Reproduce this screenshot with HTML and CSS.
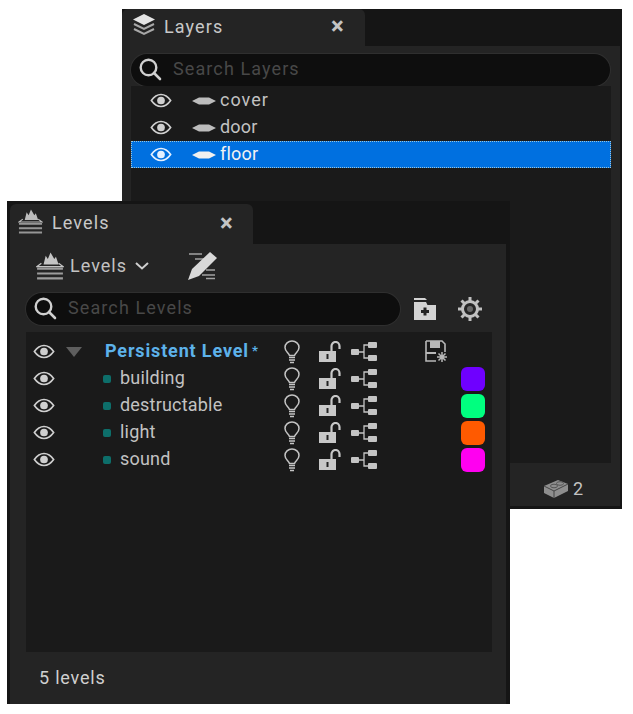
FILE: index.html
```html
<!DOCTYPE html>
<html lang="en">
<head>
<meta charset="UTF-8" />
<title>Layers and Levels</title>
<link rel="stylesheet" href="styles.css">
</head>
<body>

<svg class="defs" width="0" height="0">
  <symbol id="i-eye" viewBox="0 0 24 16">
    <path d="M1.500 8C5 3 8.500 1.500 12 1.500S19 3 22.500 8C19 13 15.500 14.500 12 14.500S5 13 1.500 8Z" fill="none" stroke="currentColor" stroke-width="1.800"/>
    <circle cx="12" cy="8" r="4.200" fill="currentColor"/>
  </symbol>
  <symbol id="i-plane" viewBox="0 0 24 8">
    <path d="M0 4 7 .5h10L24 4l-7 3.500H7Z" fill="currentColor"/>
  </symbol>
  <symbol id="i-search" viewBox="0 0 24 24">
    <circle cx="10.500" cy="10.500" r="7.800" fill="none" stroke="currentColor" stroke-width="2.400"/>
    <path d="M16 16l6 6" stroke="currentColor" stroke-width="2.600" stroke-linecap="round"/>
  </symbol>
  <symbol id="i-stack" viewBox="0 0 24 24">
    <path d="M12 1 23 6.500 12 12 1 6.500Z" fill="#e4e4e4"/>
    <path d="M2 11l10 5 10-5M2 16l10 5 10-5" fill="none" stroke="#a8a8a8" stroke-width="2"/>
  </symbol>
  <symbol id="i-levels" viewBox="0 0 26 25">
    <path d="M7 11 9 3l2 3 2.500-6L17 6l1.500-2L21 11Z" fill="currentColor"/>
    <path d="M5 10 1 13h24l-4-3" fill="none" stroke="currentColor" stroke-width="1.200"/>
    <path d="M1 15h24M1 19.500h24M1 24h24" stroke="currentColor" stroke-width="2" opacity=".75"/>
  </symbol>
  <symbol id="i-pencil" viewBox="0 0 30 28">
    <path d="M2 2h13M8 7h11M19 18h9M15 23h13M19 26.500h9" stroke="currentColor" stroke-width="1.300" opacity=".7"/>
    <path d="M23 0 30 6 12 24l-11 4 4-11Z" fill="currentColor"/>
  </symbol>
  <symbol id="i-folder" viewBox="0 0 22 22">
    <path d="M0 0h11l2 2H0Z" fill="currentColor"/>
    <path d="M0 4h12l1.500 3H22v15H0Z" fill="currentColor"/>
    <path d="M11 9.500v8M7 13.500h8" stroke="#242424" stroke-width="3"/>
  </symbol>
  <symbol id="i-gear" viewBox="0 0 24 24">
    <circle cx="12" cy="12" r="7.500" fill="none" stroke="currentColor" stroke-width="3"/>
    <path d="M12 0v5M12 19v5M0 12h5M19 12h5M3.500 3.500l3.500 3.500M17 17l3.500 3.500M20.500 3.500 17 7M7 17l-3.500 3.500" stroke="currentColor" stroke-width="3"/>
    <circle cx="12" cy="12" r="3" fill="#666"/>
  </symbol>
  <symbol id="i-bulb" viewBox="0 0 16 24">
    <path d="M5.500 15.500C4.500 12.500 1 11.500 1 7.500a7 6.500 0 0 1 14 0c0 4-3.500 5-4.500 8Z" fill="none" stroke="currentColor" stroke-width="1.500"/>
    <path d="M5 17.500h6M5 20h6M6 22.500h4" stroke="currentColor" stroke-width="1.600"/>
  </symbol>
  <symbol id="i-lock" viewBox="0 0 22 21">
    <path d="M0 10h17v11H0Z" fill="currentColor"/>
    <path d="M12.500 10V5a4 4 0 0 1 8 0v3" fill="none" stroke="currentColor" stroke-width="2.200"/>
    <path d="M8.500 13v5" stroke="#222" stroke-width="2"/>
  </symbol>
  <symbol id="i-tree" viewBox="0 0 26 20">
    <rect x="0" y="7" width="8" height="6" rx="1" fill="currentColor"/>
    <rect x="17" y="0" width="9" height="6" rx="1" fill="currentColor"/>
    <rect x="17" y="13" width="9" height="6" rx="1" fill="currentColor"/>
    <path d="M8 10h5M17 3h-4v13h4" fill="none" stroke="currentColor" stroke-width="1.300"/>
  </symbol>
  <symbol id="i-save" viewBox="0 0 24 24">
    <path d="M1 1h16l3 3v8M11 21H1V1" fill="none" stroke="currentColor" stroke-width="1.600"/>
    <path d="M5 1h10v7H5ZM1 12h10v2H1Z" fill="currentColor"/>
    <path d="M17 12v10M12 17h10M13.500 13.500l7 7M20.500 13.500l-7 7" stroke="currentColor" stroke-width="1.500"/>
  </symbol>
  <symbol id="i-brick" viewBox="0 0 26 20">
    <path d="M1 7 15 1l10 4v7L11 19 1 14Z" fill="#8e8e8e"/>
    <path d="M1 7l10 5 14-7M11 12v7" fill="none" stroke="#444" stroke-width="1"/>
    <ellipse cx="11" cy="7" rx="3.500" ry="1.800" fill="none" stroke="#555"/>
    <ellipse cx="17" cy="4.500" rx="3.500" ry="1.800" fill="none" stroke="#555"/>
  </symbol>
</svg>

<section class="window layers-window">
  <div class="tabstrip">
    <div class="tab">
      <svg class="tab-icon"><use href="#i-stack"/></svg>
      <span class="tab-title">Layers</span>
      <span class="tab-close">×</span>
    </div>
  </div>
  <div class="panel">
    <div class="search">
      <svg class="search-icon"><use href="#i-search"/></svg>
      <span class="search-hint">Search Layers</span>
    </div>
    <div class="list layers-list">
      <div class="layer-row">
        <svg class="eye"><use href="#i-eye"/></svg>
        <svg class="plane"><use href="#i-plane"/></svg>
        <span class="wide">cover</span>
      </div>
      <div class="layer-row">
        <svg class="eye"><use href="#i-eye"/></svg>
        <svg class="plane"><use href="#i-plane"/></svg>
        <span>door</span>
      </div>
      <div class="layer-row selected">
        <svg class="eye"><use href="#i-eye"/></svg>
        <svg class="plane"><use href="#i-plane"/></svg>
        <span>floor</span>
      </div>
    </div>
    <div class="status layers-status">
      <svg class="brick"><use href="#i-brick"/></svg>
      <span>2</span>
    </div>
  </div>
</section>

<section class="window levels-window">
  <div class="tabstrip">
    <div class="tab">
      <svg class="tab-icon levels-icon"><use href="#i-levels"/></svg>
      <span class="tab-title">Levels</span>
      <span class="tab-close">×</span>
    </div>
  </div>
  <div class="panel">
    <div class="toolbar">
      <svg class="toolbar-levels"><use href="#i-levels"/></svg>
      <span class="toolbar-label">Levels</span>
      <svg class="chevron" viewBox="0 0 14 8"><path d="M1 1l6 5.500L13 1" fill="none" stroke="currentColor" stroke-width="2"/></svg>
      <svg class="pencil"><use href="#i-pencil"/></svg>
    </div>
    <div class="search-row">
      <div class="search">
        <svg class="search-icon"><use href="#i-search"/></svg>
        <span class="search-hint">Search Levels</span>
      </div>
      <svg class="folder"><use href="#i-folder"/></svg>
      <svg class="gear"><use href="#i-gear"/></svg>
    </div>
    <div class="list levels-list">
      <div class="level-row">
        <svg class="eye"><use href="#i-eye"/></svg>
        <div class="level-name persistent">
          <svg class="arrow" viewBox="0 0 16 10"><path d="M0 0h16L8 10Z" fill="currentColor"/></svg>
          <span>Persistent Level</span><span class="dirty">*</span>
        </div>
        <svg class="bulb"><use href="#i-bulb"/></svg>
        <svg class="lock"><use href="#i-lock"/></svg>
        <svg class="tree"><use href="#i-tree"/></svg>
        <svg class="save"><use href="#i-save"/></svg>
        <span></span>
      </div>
      <div class="level-row">
        <svg class="eye"><use href="#i-eye"/></svg>
        <div class="level-name"><i class="dot"></i><span>building</span></div>
        <svg class="bulb"><use href="#i-bulb"/></svg>
        <svg class="lock"><use href="#i-lock"/></svg>
        <svg class="tree"><use href="#i-tree"/></svg>
        <span></span>
        <i class="swatch violet"></i>
      </div>
      <div class="level-row">
        <svg class="eye"><use href="#i-eye"/></svg>
        <div class="level-name"><i class="dot"></i><span>destructable</span></div>
        <svg class="bulb"><use href="#i-bulb"/></svg>
        <svg class="lock"><use href="#i-lock"/></svg>
        <svg class="tree"><use href="#i-tree"/></svg>
        <span></span>
        <i class="swatch green"></i>
      </div>
      <div class="level-row">
        <svg class="eye"><use href="#i-eye"/></svg>
        <div class="level-name"><i class="dot"></i><span>light</span></div>
        <svg class="bulb"><use href="#i-bulb"/></svg>
        <svg class="lock"><use href="#i-lock"/></svg>
        <svg class="tree"><use href="#i-tree"/></svg>
        <span></span>
        <i class="swatch orange"></i>
      </div>
      <div class="level-row">
        <svg class="eye"><use href="#i-eye"/></svg>
        <div class="level-name"><i class="dot"></i><span>sound</span></div>
        <svg class="bulb"><use href="#i-bulb"/></svg>
        <svg class="lock"><use href="#i-lock"/></svg>
        <svg class="tree"><use href="#i-tree"/></svg>
        <span></span>
        <i class="swatch magenta"></i>
      </div>
    </div>
    <div class="status levels-status">5 levels</div>
  </div>
</section>

</body>
</html>
```

FILE: styles.css
```css
body {
  margin: 0;
  background: #fff;
  color: #c2c2c2;
  font-family: Roboto, "Liberation Sans", sans-serif;
  font-size: 18px;
}
svg {
  display: block;
  flex: none;
}
.defs {
  position: absolute;
}

/* windows sit on a free canvas */
.window {
  position: absolute;
  display: flex;
  flex-direction: column;
  box-sizing: border-box;
  background: #151515;
}
.layers-window {
  left: 122px;
  top: 9px;
  width: 500px;
  height: 500px;
  padding: 0 2px 3px 0;
}
.levels-window {
  left: 7px;
  top: 201px;
  width: 503px;
  height: 503px;
  padding: 0 4px 0 3px;
}

.tabstrip {
  display: flex;
  height: 37px;
  flex: none;
}
.levels-window .tabstrip {
  height: 43px;
  padding-top: 3px;
  box-sizing: border-box;
}
.tab {
  display: flex;
  align-items: center;
  width: 243px;
  box-sizing: border-box;
  background: #242424;
  border-radius: 6px 6px 0 0;
  padding: 0 0 3px 10px;
}
.tab-icon {
  width: 24px;
  height: 24px;
  margin: -3px 8px 0 0;
}
.levels-window .tab {
  padding-left: 8px;
}
.levels-icon {
  width: 25px;
  height: 25px;
  color: #bdbdbd;
  margin-right: 9px;
}
.tab-title {
  color: #c8c8c8;
  width: 167px;
  letter-spacing: 1.1px;
}
.levels-window .tab-title {
  width: 168px;
}
.tab-close {
  color: #c4c4c4;
  font-size: 24px;
  font-weight: 700;
  line-height: 1;
}

.panel {
  flex: 1;
  display: flex;
  flex-direction: column;
  min-height: 0;
  background: #242424;
}

.search {
  flex: none;
  display: flex;
  align-items: center;
  height: 32px;
  box-sizing: border-box;
  background: #0e0e0e;
  border-radius: 16px;
  box-shadow: 0 0 0 1px #2f2f2f;
  color: #d0d0d0;
  padding-left: 7px;
}
.search-icon {
  width: 24px;
  height: 24px;
  margin: 0 11px 2px 0;
}
.search-hint {
  color: #484848;
  letter-spacing: 1.1px;
  padding-bottom: 3px;
}

.layers-window .search {
  margin: 8px 10px 0 9px;
}
.list {
  background: #1a1a1a;
}
.layers-list {
  flex: 1;
  margin: 0 9px;
  padding-top: 1px;
}
.layer-row {
  display: flex;
  align-items: center;
  height: 27px;
  box-sizing: border-box;
  padding-left: 19px;
}
.layer-row span {
  padding-bottom: 2px;
  letter-spacing: 0.2px;
}
.layer-row .wide {
  letter-spacing: 1px;
}
.layer-row.selected {
  background: #0070e0;
  outline: 1px dotted #9cc4d8;
  outline-offset: -1px;
  color: #f2f2f2;
}
.eye {
  width: 22px;
  height: 15px;
  color: #cfcfcf;
}
.plane {
  width: 24px;
  height: 8px;
  margin: 0 4px 0 20px;
  color: #bcbcbc;
}
.selected .eye {
  color: #e4f0ff;
}
.selected .plane {
  color: #f0f0f0;
}
.status {
  flex: none;
  display: flex;
  align-items: center;
}
.layers-status {
  height: 43px;
  box-sizing: border-box;
  padding: 8px 37px 0 0;
  justify-content: flex-end;
  gap: 4px;
}
.brick {
  width: 26px;
  height: 20px;
}

.toolbar {
  flex: none;
  display: flex;
  align-items: center;
  height: 44px;
  padding-left: 26px;
}
.toolbar-levels {
  width: 28px;
  height: 28px;
  color: #c4c4c4;
  margin-right: 6px;
}
.toolbar-label {
  color: #c2c2c2;
  letter-spacing: 1px;
  padding-bottom: 2px;
}
.chevron {
  width: 14px;
  height: 8px;
  margin-left: 8px;
  color: #cfcfcf;
}
.pencil {
  width: 30px;
  height: 28px;
  margin-left: 38px;
  color: #d8d8d8;
}
.search-row {
  flex: none;
  display: flex;
  align-items: center;
  height: 32px;
  margin-top: 5px;
  padding-left: 16px;
}
.search-row .search {
  width: 374px;
}
.folder {
  width: 22px;
  height: 22px;
  margin-left: 14px;
  color: #d4d4d4;
}
.gear {
  width: 24px;
  height: 24px;
  margin-left: 22px;
  color: #c0c0c0;
}

.levels-list {
  flex: 1;
  margin: 7px 14px 0 16px;
  padding-top: 6px;
}
.level-row {
  display: grid;
  grid-template-columns: 34px 214px 36px 36px 36px 73px 36px;
  align-items: center;
  justify-items: center;
  height: 27px;
}
.level-row .eye {
  margin-left: 2px;
}
.level-name {
  justify-self: stretch;
  display: flex;
  align-items: center;
  padding-left: 43px;
}
.level-name span {
  padding-bottom: 2px;
  letter-spacing: 0.2px;
}
.persistent {
  padding-left: 6px;
  color: #5db2ea;
  font-weight: 700;
}
.persistent span {
  letter-spacing: 0.85px;
}
.arrow {
  width: 16px;
  height: 10px;
  margin-right: 23px;
  color: #5e5e5e;
}
.persistent .dirty {
  margin-left: 3px;
  font-size: 13px;
}
.dot {
  width: 8px;
  height: 8px;
  border-radius: 2px;
  background: #0d6e6a;
  margin-right: 9px;
}
.bulb {
  width: 16px;
  height: 24px;
  color: #c4c4c4;
}
.lock {
  width: 22px;
  height: 21px;
  margin-left: 3px;
  color: #c8c8c8;
}
.tree {
  width: 26px;
  height: 20px;
  color: #c4c4c4;
}
.save {
  width: 24px;
  height: 24px;
  justify-self: end;
  margin-right: 6px;
  color: #b8b8b8;
}
.swatch {
  width: 24px;
  height: 24px;
  border-radius: 6px;
}
.violet { background: #6f00ff; }
.green { background: #00ff7f; }
.orange { background: #ff5a00; }
.magenta { background: #ff00f0; }

.levels-status {
  height: 52px;
  box-sizing: border-box;
  padding: 0 0 2px 29px;
  color: #d0d0d0;
  letter-spacing: 0.8px;
}
```
